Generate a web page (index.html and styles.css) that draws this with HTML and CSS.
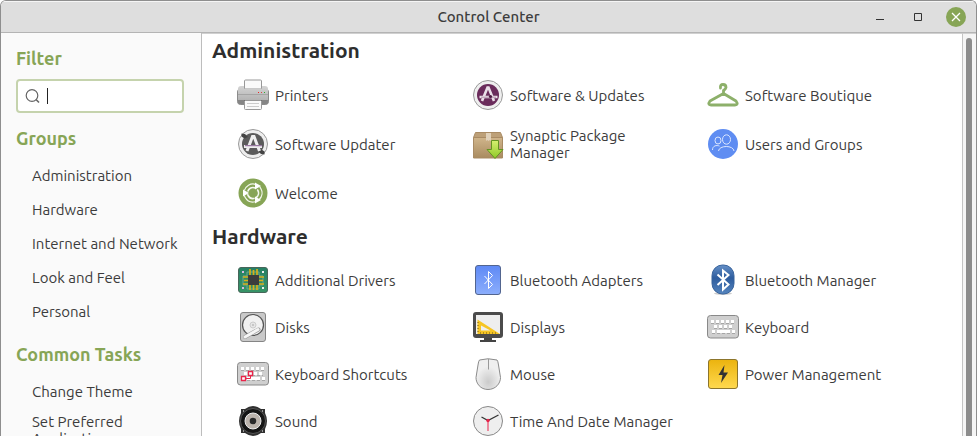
FILE: index.html
```html
<!DOCTYPE html>
<html lang="en">
<head>
<meta charset="utf-8">
<title>Control Center</title>
<link rel="stylesheet" href="styles.css">
</head>
<body>
<div class="window">
  <header class="titlebar">
    <h1 class="title">Control Center</h1>
    <div class="controls">
      <button class="control" type="button" aria-label="Minimize"><svg width="20" height="20" viewBox="0 0 20 20"><path d="M6 12.500h8" stroke="#333"/></svg></button>
      <button class="control" type="button" aria-label="Maximize"><svg width="20" height="20" viewBox="0 0 20 20"><path d="M6.500 6.500h7v7h-7z" fill="none" stroke="#333"/></svg></button>
      <button class="control close" type="button" aria-label="Close"><svg width="20" height="20" viewBox="0 0 20 20"><path d="M6 6l8 8M14 6l-8 8" stroke="#fff" stroke-width="1.300"/></svg></button>
    </div>
  </header>
  <div class="body">
    <aside class="sidebar">
      <section class="block">
        <h2 class="side-heading"><label for="filter">Filter</label></h2>
        <div class="search">
          <svg width="16" height="16" viewBox="0 0 16 16" fill="none" stroke="#666" stroke-width="1.200"><circle cx="7" cy="7.500" r="5.800"/><path d="M11 11.500l3 3" stroke-width="1.600"/></svg>
          <span class="caret"></span>
          <input id="filter" type="text">
        </div>
      </section>
      <nav class="block links">
        <h2 class="side-heading">Groups</h2>
        <a class="side-item" href="#administration">Administration</a>
        <a class="side-item" href="#hardware">Hardware</a>
        <a class="side-item" href="#internet">Internet and Network</a>
        <a class="side-item" href="#look">Look and Feel</a>
        <a class="side-item" href="#personal">Personal</a>
      </nav>
      <nav class="block links">
        <h2 class="side-heading">Common Tasks</h2>
        <a class="side-item" href="#theme">Change Theme</a>
        <a class="side-item" href="#preferred">Set Preferred<br>Applications</a>
      </nav>
    </aside>
    <main class="content">
      <section class="group" id="administration">
        <h2 class="group-heading">Administration</h2>
        <div class="tiles">
          <button class="tile" type="button">
            <svg class="icon" viewBox="0 0 32 32"><defs><linearGradient id="metal" x2="0" y2="1"><stop stop-color="#d4d4d4"/><stop offset="1" stop-color="#b4b4b4"/></linearGradient></defs><rect x=".5" y="10" width="31" height="15.500" rx="3" fill="#858585" stroke="#8b8b8b"/><rect x="7.500" y="1" width="17" height="9" rx="1" fill="#fafafa" stroke="#999"/><path d="M1 10q0-3 3-3h3v3h18V7h3q3 0 3 3v11H1z" fill="url(#metal)"/><path d="M1 15.500h30" stroke="#a5a5a5"/><path d="M7 21h18v2H7z" fill="#555"/><rect x="7.500" y="21.500" width="17" height="9" rx="1" fill="#fafafa" stroke="#999"/><path d="M10 24.500h12M10 27.500h12" stroke="#ccc"/><path d="M21 13.500h1" stroke="#e22"/><path d="M24 13.500h1" stroke="#d44"/><path d="M27 13.500h1" stroke="#3a3"/></svg>
            <span>Printers</span>
          </button>
          <button class="tile" type="button">
            <svg class="icon" viewBox="0 0 32 32"><circle cx="16" cy="16" r="14.500" fill="#eee" stroke="#999"/><circle cx="16" cy="16" r="11" fill="#6a2b5b"/><path d="M10 22l5.500-13.500h1L22 22M7.500 18h18" fill="none" stroke="#eadfe8" stroke-width="2.600"/><path d="M9 18.200h15" stroke="#8a5b80" stroke-width=".6"/><circle cx="18.500" cy="17.500" r="1.600" fill="#4b193f"/></svg>
            <span>Software &amp; Updates</span>
          </button>
          <button class="tile" type="button">
            <svg class="icon" viewBox="0 0 32 32" fill="none" stroke="#8db06a" stroke-width="2.800" stroke-linecap="round" stroke-linejoin="round"><path d="M13.500 9q-.5-3.500 2.500-3.500t3 3q-.3 1.500-2.500 3v3L29 22q2.800 4-1 4H4q-3.800 0-1-4l13.500-7.500"/></svg>
            <span>Software Boutique</span>
          </button>
          <button class="tile" type="button">
            <svg class="icon" viewBox="0 0 32 32"><circle cx="16" cy="16" r="14.500" fill="#eee" stroke="#999"/><circle cx="16" cy="16" r="11" fill="#5b5b5b"/><path d="M4.500 5.500l3.500.5 3 3-3.500 1.500-3-2zM27.500 26.500l-3.500-.5-3-3 3.500-1.500 3 2z" fill="#444"/><path d="M10 23l5.500-14.500h1.500L22.500 23M7 18.500h18" fill="none" stroke="#eee" stroke-width="3"/><path d="M8 17.700h17" stroke="#865e91"/></svg>
            <span>Software Updater</span>
          </button>
          <button class="tile" type="button">
            <svg class="icon" viewBox="0 0 32 32"><defs><linearGradient id="box" x2="0" y2="1"><stop stop-color="#d0b58b"/><stop offset="1" stop-color="#a98b60"/></linearGradient><linearGradient id="arrow" x2="0" y2="1"><stop stop-color="#d5ef70"/><stop offset="1" stop-color="#8fc926"/></linearGradient></defs><path d="M3.500 4.500h25l2 5H1.500z" fill="#bda078" stroke="#a98b64"/><path d="M1.500 9.500h29V30h-29z" fill="url(#box)" stroke="#a98b64"/><path d="M14 5h5v8l-1.200-1-1.300 1-1.200-1-1.300 1z" fill="#e0d1ba"/><path d="M19.500 12.500h7v9h4.500l-8 9-8-9h4.500z" fill="url(#arrow)" stroke="#639322"/></svg>
            <span>Synaptic Package Manager</span>
          </button>
          <button class="tile" type="button">
            <svg class="icon" viewBox="0 0 32 32"><circle cx="16" cy="16" r="15" fill="#5f8df2"/><g fill="none" stroke="#dce7ff"><ellipse cx="11" cy="12.500" rx="3" ry="3.500"/><ellipse cx="19.500" cy="11.500" rx="4" ry="4.700"/><path d="M11.500 23c.5-6 15-6 15.500 0M5.500 22c0-4.500 4-5 7-4"/></g></svg>
            <span>Users and Groups</span>
          </button>
          <button class="tile" type="button">
            <svg class="icon" viewBox="0 0 32 32"><circle cx="16" cy="16" r="14.500" fill="#87a556"/><g fill="none" stroke="#f4f8ed" transform="rotate(60 16 16)"><circle cx="16" cy="16" r="9" stroke-width="1.200" stroke-dasharray="13.850 5" stroke-dashoffset="-2.500"/><circle cx="16" cy="16" r="5.500" stroke-width="1.600" stroke-dasharray="9 2.520" stroke-dashoffset="-1.260"/></g><g fill="#fff"><path id="wedge" d="M6 12.500l6 3.500-6 3.500z"/><path d="M6 12.500l6 3.500-6 3.500z" transform="rotate(120 16 16)"/><path d="M6 12.500l6 3.500-6 3.500z" transform="rotate(240 16 16)"/></g></svg>
            <span>Welcome</span>
          </button>
        </div>
      </section>
      <section class="group" id="hardware">
        <h2 class="group-heading">Hardware</h2>
        <div class="tiles">
          <button class="tile" type="button">
            <svg class="icon" viewBox="0 0 32 32"><defs><linearGradient id="board" x2="0" y2="1"><stop stop-color="#268064"/><stop offset="1" stop-color="#389467"/></linearGradient></defs><rect x="1.500" y="3.500" width="29" height="25" rx="2.500" fill="url(#board)" stroke="#47665a"/><path d="M6 12h4V8h12v4h4v9h-4v4H10v-4H6z" fill="none" stroke="#6aa88e"/><path d="M13 5v6M16.500 6v5M20 5v6M13 21v5M16.500 21v5M20 21v5M6 13h5M7 16.500h4M6 20h5M22 13h5M22 16.500h4M22 20h5" stroke="#d9ae1b" stroke-width="1.700"/><rect x="11" y="11" width="11" height="10" fill="#3d3d3d"/><path d="M5 8h2M5 24h2" stroke="#d8b9e0" stroke-width="2"/><path d="M25 8h2M25 24h2" stroke="#eee" stroke-width="2"/></svg>
            <span>Additional Drivers</span>
          </button>
          <button class="tile" type="button">
            <svg class="icon" viewBox="0 0 32 32"><defs><linearGradient id="blue" x2="0" y2="1"><stop stop-color="#5e89f5"/><stop offset="1" stop-color="#8caefc"/></linearGradient></defs><rect x="3.500" y="1.500" width="25" height="29" rx="2.500" fill="url(#blue)" stroke="#52658f"/><path d="M12.500 12l8 8.500-4 4v-17l4 4-8 8.500" fill="none" stroke="#fff"/></svg>
            <span>Bluetooth Adapters</span>
          </button>
          <button class="tile" type="button">
            <svg class="icon" viewBox="0 0 32 32"><defs><linearGradient id="navy" x2="0" y2="1"><stop stop-color="#6590c7"/><stop offset=".45" stop-color="#2d5c9e"/><stop offset="1" stop-color="#5585be"/></linearGradient></defs><ellipse cx="16" cy="29.500" rx="9" ry="1.500" fill="#ccc"/><rect x="5" y="1" width="22" height="29" rx="10.500" fill="url(#navy)" stroke="#37629b"/><path d="M10.500 10.500l11 10-5.500 5v-19l5.500 4.500-11 10" fill="none" stroke="#fff" stroke-width="2"/></svg>
            <span>Bluetooth Manager</span>
          </button>
          <button class="tile" type="button">
            <svg class="icon" viewBox="0 0 32 32"><rect x="3.500" y="1.500" width="25" height="29" rx="2.500" fill="#c9c9c9" stroke="#858585"/><circle cx="16" cy="14" r="10.500" fill="#f1f1f1" stroke="#555" stroke-width="1.200"/><circle cx="16" cy="14" r="3" fill="#e5e5e5" stroke="#ccc"/><circle cx="16" cy="14" r="1" fill="#bbb"/><path d="M21.500 18.500L8 26" stroke="#999" stroke-width="4" stroke-linecap="round"/><path d="M21 18.500L8 26" stroke="#f5f5f5" stroke-width="3" stroke-linecap="round"/></svg>
            <span>Disks</span>
          </button>
          <button class="tile" type="button">
            <svg class="icon" viewBox="0 0 32 32"><path d="M12 26h8v3h4v2H8v-2h4z" fill="#444"/><rect x="1" y="1" width="30" height="26" rx="3" fill="#4b4b4b"/><path d="M4 4h24v19H4z" fill="#eee"/><path d="M5.500 8.500V23H28zM9 14.500l9.500 5H9z" fill="#f6c524" fill-rule="evenodd"/><path d="M6 11v10M8 22h16" stroke="#705a12" stroke-dasharray="1 2"/></svg>
            <span>Displays</span>
          </button>
          <button class="tile" type="button">
            <svg class="icon" viewBox="0 0 32 32"><rect x=".5" y="4.500" width="31" height="22.500" rx="3" fill="#cfcfcf" stroke="#898989"/><path d="M4 10.500h24M7 15.500h19M5 20.500h3M25 20.500h3" stroke="#fff" stroke-width="3" stroke-dasharray="3 2"/><path d="M10 20.500h13" stroke="#fff" stroke-width="3"/><path d="M4 12.500h24M7 17.500h19M5 22.500h3M10 22.500h13M25 22.500h3" stroke="#a6a6a6" stroke-dasharray="3 2"/></svg>
            <span>Keyboard</span>
          </button>
          <button class="tile" type="button">
            <svg class="icon" viewBox="0 0 32 32"><rect x=".5" y="4.500" width="31" height="22.500" rx="3" fill="#cfcfcf" stroke="#898989"/><path d="M4 10.500h24M7 15.500h19M25 20.500h3" stroke="#fff" stroke-width="3" stroke-dasharray="3 2"/><path d="M10 20.500h13" stroke="#fff" stroke-width="3"/><path d="M4 12.500h24M15 17.500h11M10 22.500h13M25 22.500h3" stroke="#a6a6a6" stroke-dasharray="3 2"/><path d="M8 20.500h5.500V18" fill="none" stroke="#e9254a"/><path d="M4.500 18.500h4v4h-4zM11.500 13.500h4v4h-4z" fill="#fff" stroke="#e9254a" stroke-width="1.300"/></svg>
            <span>Keyboard Shortcuts</span>
          </button>
          <button class="tile" type="button">
            <svg class="icon" viewBox="0 0 32 32"><defs><radialGradient id="mouse" cy=".75"><stop stop-color="#cbcbcb"/><stop offset="1" stop-color="#efefef"/></radialGradient></defs><path d="M7.500 2q8.500-2.500 17.500 0 1 1 1.500 5l2 12.500c0 6-5 12-12.500 12s-12-6-12-12L6 7q.5-4 1.500-5z" fill="url(#mouse)" stroke="#8b8b8b"/><path d="M16.500 1v10.500" stroke="#999"/></svg>
            <span>Mouse</span>
          </button>
          <button class="tile" type="button">
            <svg class="icon" viewBox="0 0 32 32"><defs><linearGradient id="yellow" x2="0" y2="1"><stop stop-color="#ebb30e"/><stop offset="1" stop-color="#ffd94f"/></linearGradient></defs><rect x="1.500" y="1.500" width="29" height="29" rx="2.500" fill="url(#yellow)" stroke="#8c752c"/><path d="M17.500 7l-6 10h4L14 25l7-10.500h-4.500z" fill="#333"/></svg>
            <span>Power Management</span>
          </button>
          <button class="tile" type="button">
            <svg class="icon" viewBox="0 0 32 32"><path d="M8 4q8-6 16 0h4v4q4 8 0 16v4h-4q-8 6-16 0H4v-4Q0 16 4 8V4z" fill="#303030"/><circle cx="16" cy="16" r="12.500" fill="#151515" stroke="#555"/><circle cx="16" cy="16" r="8" fill="#bcb4ad" stroke="#eee"/><circle cx="16" cy="16" r="3.300" fill="#292929"/><path d="M6 6h1M25 6h1M6 26h1M25 26h1" stroke="#bbb" stroke-width="1.500"/></svg>
            <span>Sound</span>
          </button>
          <button class="tile" type="button">
            <svg class="icon" viewBox="0 0 32 32"><circle cx="16" cy="16" r="14.500" fill="#eee" stroke="#888"/><path d="M9.500 12l6.500 3.500 10.500-5.500" fill="none" stroke="#333" stroke-width="1.300"/><path d="M16 15.500V26" stroke="#e8234a"/><circle cx="16" cy="15.500" r="1.700" fill="#e8234a"/></svg>
            <span>Time And Date Manager</span>
          </button>
        </div>
      </section>
    </main>
    <div class="scrollbar"><div class="thumb"></div></div>
  </div>
</div>
</body>
</html>
```

FILE: styles.css
```css
* { box-sizing: border-box; }

body {
  margin: 0;
  background: #fff;
  color: #3c3c3c;
  font: 15px/17px Ubuntu, "Noto Sans", sans-serif;
}

h1, h2 { margin: 0; }

.window {
  display: flex;
  flex-direction: column;
  height: 100vh;
  overflow: hidden;
  border: 1px solid #8e8e8e;
  border-bottom: 0;
  border-radius: 6px 6px 0 0;
  background: #fafafa;
}

.titlebar {
  display: grid;
  grid-template-columns: 1fr auto 1fr;
  align-items: center;
  flex: none;
  height: 32px;
  padding: 0 10px;
  border-top: 1px solid #f5f5f5;
  border-bottom: 1px solid #b4b4b4;
  background: #dedede;
}

.title {
  grid-column: 2;
  font-size: 15px;
  font-weight: 500;
  line-height: 16px;
}

.controls {
  display: flex;
  justify-content: flex-end;
  gap: 18px;
}

.control {
  width: 20px;
  height: 20px;
  padding: 0;
  border: 0;
  border-radius: 50%;
  background: none;
}

.control svg { display: block; }

.close { background: #87a556; }

.body {
  display: flex;
  flex: 1;
  min-height: 0;
}

.sidebar {
  display: flex;
  flex-direction: column;
  gap: 13px;
  flex: none;
  width: 201px;
  padding: 13px 17px 0 15px;
  overflow: hidden;
  border-right: 1px solid #bdbdbd;
}

.block { flex: none; }

.links { margin-bottom: 1px; }

.side-heading {
  margin-bottom: 8px;
  color: #87a556;
  font-size: 18px;
  font-weight: 700;
  line-height: 24px;
}

.search {
  display: flex;
  align-items: center;
  height: 34px;
  margin-top: 9px;
  padding: 0 7px;
  border: 2px solid #c5d3ad;
  border-radius: 4px;
  background: #fff;
}

.search svg { flex: none; }

.caret {
  flex: none;
  width: 1px;
  height: 16px;
  margin-left: 6px;
  background: #222;
}

.search input {
  flex: 1;
  min-width: 0;
  padding: 0;
  border: 0;
  outline: 0;
  background: none;
  font: inherit;
}

.side-item {
  display: flex;
  align-items: center;
  min-height: 34px;
  padding: 5px 0 5px 16px;
  color: inherit;
  text-decoration: none;
  white-space: nowrap;
}

.content {
  flex: 1;
  min-width: 0;
  padding: 2px 10px 0;
  overflow: hidden;
  border-top: 1px solid #d0d0d0;
  background: #fff;
}

.group { margin-bottom: 12px; }

.group-heading {
  margin-bottom: 14px;
  color: #2e2e2e;
  font-size: 21px;
  font-weight: 700;
  line-height: 28px;
}

.tiles {
  display: grid;
  grid-template-columns: repeat(auto-fill, 210px);
  grid-auto-rows: 1fr;
  gap: 15px 25px;
  padding-left: 25px;
}

.tile {
  display: flex;
  align-items: center;
  gap: 6px;
  padding: 0;
  border: 0;
  background: none;
  color: inherit;
  font: inherit;
  text-align: left;
}

.icon {
  flex: none;
  width: 32px;
  height: 32px;
}

.scrollbar {
  flex: none;
  width: 14px;
  padding: 4px 4px 0 3px;
  border-top: 1px solid #d0d0d0;
  border-left: 1px solid #c4c4c4;
  background: #f5f5f5;
}

.thumb {
  height: 100%;
  border-radius: 3px 3px 0 0;
  background: #8c8c8c;
}
```
